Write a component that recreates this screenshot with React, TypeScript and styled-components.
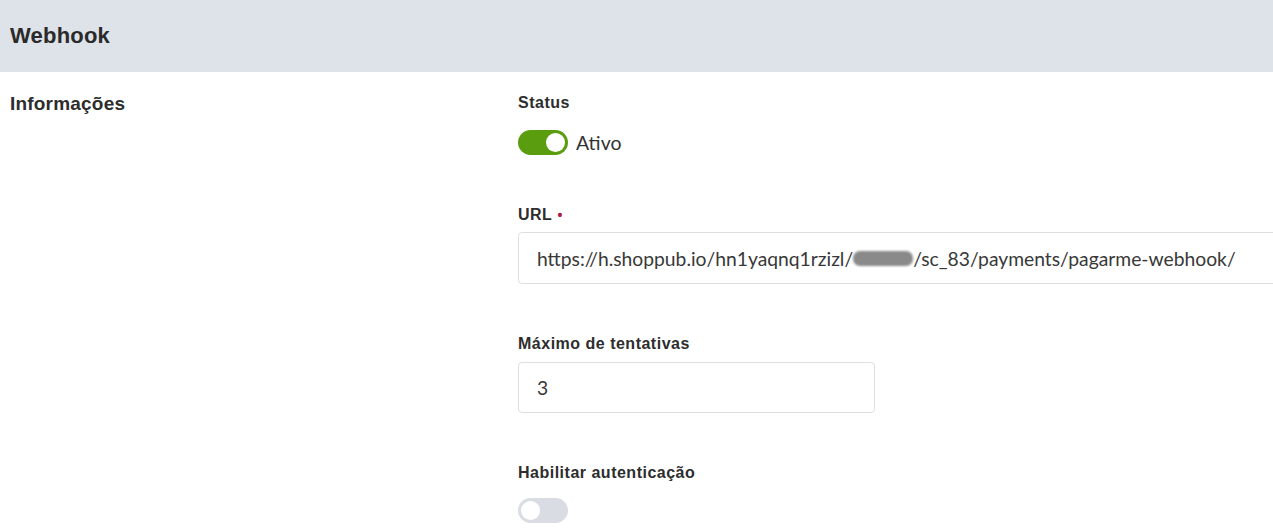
import React from "react";
import styled, { createGlobalStyle } from "styled-components";

const Global = createGlobalStyle`
  html, body { margin: 0; padding: 0; background: #fff; overflow: hidden; }
  body { font-family: "Liberation Sans", Arial, sans-serif; color: #2d2d2d; }
  * { box-sizing: border-box; }
`;

const Page = styled.div`
  width: 1273px;
  height: 530px;
  overflow: hidden;
`;

const Header = styled.header`
  height: 72px;
  background: #dde3e8;
  display: flex;
  align-items: center;
  padding-left: 10px;
`;

const Title = styled.h1`
  margin: 0;
  font-size: 22px;
  font-weight: 700;
  letter-spacing: 0.2px;
  color: #2a2a2a;
`;

const Body = styled.div`
  display: grid;
  grid-template-columns: 508px 1fr;
  padding: 21px 0 0 10px;
`;

const SectionTitle = styled.h2`
  margin: 0;
  font-size: 19px;
  line-height: 22px;
  font-weight: 700;
  letter-spacing: 0.2px;
  color: #2d2d2d;
`;

const Fields = styled.div`
  display: flex;
  flex-direction: column;
  gap: 50px;
`;

const Field = styled.div`
  display: flex;
  flex-direction: column;
`;

const Label = styled.label<{ $gap: number }>`
  font-size: 16px;
  line-height: 20px;
  font-weight: 700;
  letter-spacing: 0.5px;
  color: #2d2d2d;
  margin-bottom: ${(p) => p.$gap}px;
`;

const Required = styled.span`
  color: #b0174a;
  margin-left: 5px;
  font-size: 14px;
`;

const ToggleRow = styled.div`
  display: flex;
  align-items: center;
  gap: 8px;
`;

const Track = styled.span<{ $on: boolean }>`
  position: relative;
  display: inline-block;
  width: 50px;
  height: 25px;
  border-radius: 13px;
  background: ${(p) => (p.$on ? "#5a9e10" : "#d9dde3")};
  flex: none;
`;

const Knob = styled.span<{ $on: boolean }>`
  position: absolute;
  top: 3px;
  left: ${(p) => (p.$on ? "28px" : "3px")};
  width: 19px;
  height: 19px;
  border-radius: 50%;
  background: #fff;
`;

const ToggleText = styled.span`
  font-family: Lato, "Liberation Sans", sans-serif;
  font-size: 19.5px;
  color: #333;
`;

const Input = styled.div<{ $width: number; $height: number }>`
  width: ${(p) => p.$width}px;
  height: ${(p) => p.$height}px;
  border: 1px solid #dedede;
  border-radius: 4px;
  display: flex;
  align-items: center;
  padding-left: 18px;
  font-family: Lato, "Liberation Sans", sans-serif;
  font-size: 19.3px;
  color: #383838;
  white-space: nowrap;
`;

const Redacted = styled.span`
  display: inline-block;
  width: 60px;
  height: 15px;
  border-radius: 7px;
  background: #8a8a8a;
  color: transparent;
  filter: blur(1.2px);
  overflow: hidden;
  vertical-align: middle;
  font-size: 10px;
`;

function Toggle({ on, text }: { on: boolean; text?: string }) {
  return (
    <ToggleRow>
      <Track $on={on}>
        <Knob $on={on} />
      </Track>
      {text && <ToggleText>{text}</ToggleText>}
    </ToggleRow>
  );
}

export default function App() {
  return (
    <Page>
      <Global />
      <Header>
        <Title>Webhook</Title>
      </Header>
      <Body>
        <SectionTitle>Informações</SectionTitle>
        <Fields>
          <Field>
            <Label $gap={17}>Status</Label>
            <Toggle on text="Ativo" />
          </Field>
          <Field>
            <Label $gap={7}>
              URL<Required>•</Required>
            </Label>
            <Input $width={780} $height={52}>
              https://h.shoppub.io/hn1yaqnq1rzizl/<Redacted>xxxxx</Redacted>/sc_83/payments/pagarme-webhook/
            </Input>
          </Field>
          <Field>
            <Label $gap={8}>Máximo de tentativas</Label>
            <Input $width={357} $height={51}>3</Input>
          </Field>
          <Field>
            <Label $gap={15}>Habilitar autenticação</Label>
            <Toggle on={false} />
          </Field>
        </Fields>
      </Body>
    </Page>
  );
}
